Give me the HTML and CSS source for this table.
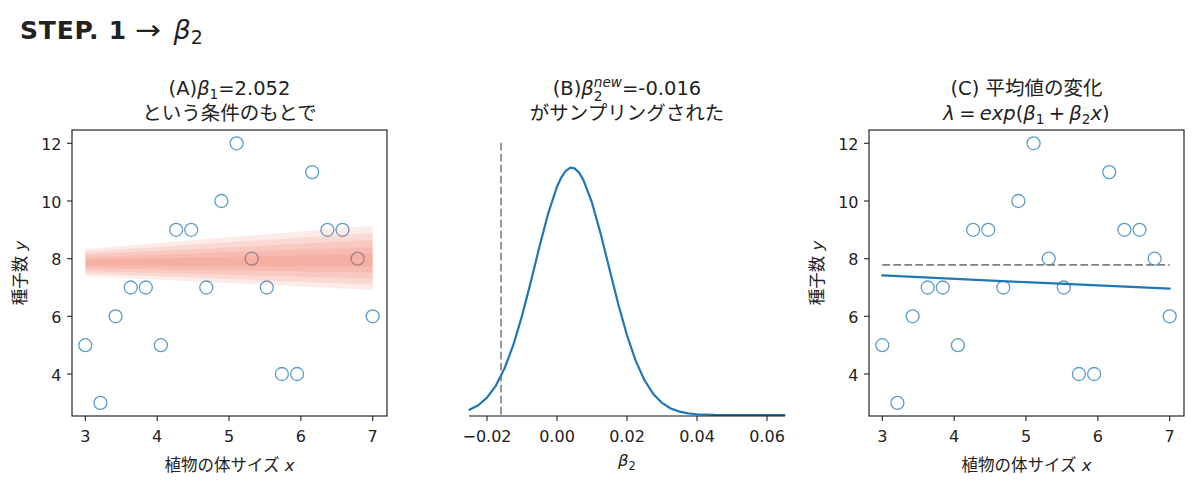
FILE: index.html
```html
<!DOCTYPE html>
<html lang="ja">
<head>
<meta charset="utf-8">
<title>STEP. 1 → β2</title>
<link rel="stylesheet" href="styles.css">
</head>
<body>
<header class="fig-title"><span class="bold">STEP. 1</span> <span class="arrow">→</span> <i class="mi">β</i><sub>2</sub></header>
<main class="panels">
  <section class="panel panel-a">
    <div class="ptitle">
      <div>(A)<i class="mi">β</i><sub>1</sub>=2.052</div>
      <div>という条件のもとで</div>
    </div>
    <svg class="plot" width="400" height="362" viewBox="0 125 400 362">
      <g class="pts">
        <circle cx="85.3" cy="345.2" r="6.5"/><circle cx="100.4" cy="402.9" r="6.5"/><circle cx="115.6" cy="316.3" r="6.5"/><circle cx="130.7" cy="287.5" r="6.5"/><circle cx="145.8" cy="287.5" r="6.5"/>
        <circle cx="160.9" cy="345.2" r="6.5"/><circle cx="176.1" cy="229.8" r="6.5"/><circle cx="191.2" cy="229.8" r="6.5"/><circle cx="206.3" cy="287.5" r="6.5"/><circle cx="221.4" cy="201.0" r="6.5"/>
        <circle cx="236.6" cy="143.3" r="6.5"/><circle cx="251.7" cy="258.7" r="6.5"/><circle cx="266.8" cy="287.5" r="6.5"/><circle cx="281.9" cy="374.0" r="6.5"/><circle cx="297.1" cy="374.0" r="6.5"/>
        <circle cx="312.2" cy="172.1" r="6.5"/><circle cx="327.4" cy="229.8" r="6.5"/><circle cx="342.5" cy="229.8" r="6.5"/><circle cx="357.6" cy="258.7" r="6.5"/><circle cx="372.7" cy="316.3" r="6.5"/>
      </g>
      <g class="band">
        <polygon points="85.3,248.9 372.7,225.7 372.7,290.1 85.3,276.05"/>
        <polygon points="85.3,251.7 372.7,233.0 372.7,284.4 85.3,273.5"/>
        <polygon points="85.3,254.6 372.7,240.1 372.7,278.6 85.3,270.9"/>
        <polygon points="85.3,257.4 372.7,246.9 372.7,272.6 85.3,268.2"/>
        <polygon points="85.3,260.1 372.7,253.6 372.7,266.5 85.3,265.6"/>
      </g>
      <rect class="spine" x="72" y="130" width="315" height="286"/>
      <g class="ticks">
        <line x1="67" x2="72" y1="143.3" y2="143.3"/><line x1="67" x2="72" y1="201.0" y2="201.0"/><line x1="67" x2="72" y1="258.7" y2="258.7"/><line x1="67" x2="72" y1="316.3" y2="316.3"/><line x1="67" x2="72" y1="374.0" y2="374.0"/>
        <line x1="85.3" x2="85.3" y1="416" y2="421"/><line x1="157.2" x2="157.2" y1="416" y2="421"/><line x1="229" x2="229" y1="416" y2="421"/><line x1="300.9" x2="300.9" y1="416" y2="421"/><line x1="372.7" x2="372.7" y1="416" y2="421"/>
      </g>
      <g class="tl tl-y">
        <text x="61.5" y="149.8">12</text><text x="61.5" y="207.5">10</text><text x="61.5" y="265.2">8</text><text x="61.5" y="322.8">6</text><text x="61.5" y="380.5">4</text>
      </g>
      <g class="tl tl-x">
        <text x="85.3" y="441.5">3</text><text x="157.2" y="441.5">4</text><text x="229" y="441.5">5</text><text x="300.9" y="441.5">6</text><text x="372.7" y="441.5">7</text>
      </g>
      <text class="alabel" x="229.5" y="471">植物の体サイズ <tspan class="mi">x</tspan></text>
      <text class="alabel" transform="translate(25.5 273) rotate(-90)">種子数 <tspan class="mi">y</tspan></text>
    </svg>
  </section>

  <section class="panel panel-b">
    <div class="ptitle">
      <div>(B)<i class="mi">β</i><span class="ss"><i class="ss-sup">new</i><span class="ss-sub">2</span></span>=-0.016</div>
      <div>がサンプリングされた</div>
    </div>
    <svg class="plot" width="400" height="362" viewBox="400 125 400 362">
      <line class="dash" x1="501" x2="501" y1="142.7" y2="416"/>
      <polyline class="curve" points="469.5,409.8 478.25,405.25 487,397.6 495.75,385.8 504.5,368.5 513.25,345.2 522,315.9 530.75,282.1 539.5,246.5 548.25,213.25 557,186.7 561.4,177.3 565.75,170.9 570.1,167.9 571.7,167.7 574.5,168.4 578.9,172.4 583.25,179.6 592,202.7 600.75,234.1 609.5,269.3 618.25,304.1 627,335.3 635.75,360.85 644.5,380.24 653.25,393.9 662,402.9 670.75,408.5 679.5,411.65 688.25,413.4 697,414.26 714.5,414.9 740,415 784.5,415"/>
      <line class="spine-line" x1="469" x2="785" y1="416" y2="416"/>
      <g class="ticks">
        <line x1="487" x2="487" y1="416" y2="421"/><line x1="557" x2="557" y1="416" y2="421"/><line x1="627" x2="627" y1="416" y2="421"/><line x1="697" x2="697" y1="416" y2="421"/><line x1="767" x2="767" y1="416" y2="421"/>
      </g>
      <g class="tl tl-x">
        <text x="487" y="441.5">−0.02</text><text x="557" y="441.5">0.00</text><text x="627" y="441.5">0.02</text><text x="697" y="441.5">0.04</text><text x="767" y="441.5">0.06</text>
      </g>
      <text class="alabel" x="627" y="466"><tspan class="mi">β</tspan><tspan class="sub-t" dy="3.5">2</tspan></text>
    </svg>
  </section>

  <section class="panel panel-c">
    <div class="ptitle">
      <div>(C) 平均値の変化</div>
      <div class="mathline"><i class="mi">λ</i><span class="op">=</span><i class="mi">exp</i>(<i class="mi">β</i><sub>1</sub><span class="op">+</span><i class="mi">β</i><sub>2</sub><i class="mi">x</i>)</div>
    </div>
    <svg class="plot" width="400" height="362" viewBox="800 125 400 362">
      <g transform="translate(797 0)">
        <g class="pts">
          <circle cx="85.3" cy="345.2" r="6.5"/><circle cx="100.4" cy="402.9" r="6.5"/><circle cx="115.6" cy="316.3" r="6.5"/><circle cx="130.7" cy="287.5" r="6.5"/><circle cx="145.8" cy="287.5" r="6.5"/>
          <circle cx="160.9" cy="345.2" r="6.5"/><circle cx="176.1" cy="229.8" r="6.5"/><circle cx="191.2" cy="229.8" r="6.5"/><circle cx="206.3" cy="287.5" r="6.5"/><circle cx="221.4" cy="201.0" r="6.5"/>
          <circle cx="236.6" cy="143.3" r="6.5"/><circle cx="251.7" cy="258.7" r="6.5"/><circle cx="266.8" cy="287.5" r="6.5"/><circle cx="281.9" cy="374.0" r="6.5"/><circle cx="297.1" cy="374.0" r="6.5"/>
          <circle cx="312.2" cy="172.1" r="6.5"/><circle cx="327.4" cy="229.8" r="6.5"/><circle cx="342.5" cy="229.8" r="6.5"/><circle cx="357.6" cy="258.7" r="6.5"/><circle cx="372.7" cy="316.3" r="6.5"/>
        </g>
        <line class="dash" x1="85.3" x2="372.7" y1="264.9" y2="264.9"/>
        <polyline class="curve" points="85.3,275.4 229,282.2 372.7,288.7"/>
        <rect class="spine" x="72" y="130" width="315" height="286"/>
        <g class="ticks">
          <line x1="67" x2="72" y1="143.3" y2="143.3"/><line x1="67" x2="72" y1="201.0" y2="201.0"/><line x1="67" x2="72" y1="258.7" y2="258.7"/><line x1="67" x2="72" y1="316.3" y2="316.3"/><line x1="67" x2="72" y1="374.0" y2="374.0"/>
          <line x1="85.3" x2="85.3" y1="416" y2="421"/><line x1="157.2" x2="157.2" y1="416" y2="421"/><line x1="229" x2="229" y1="416" y2="421"/><line x1="300.9" x2="300.9" y1="416" y2="421"/><line x1="372.7" x2="372.7" y1="416" y2="421"/>
        </g>
        <g class="tl tl-y">
          <text x="61.5" y="149.8">12</text><text x="61.5" y="207.5">10</text><text x="61.5" y="265.2">8</text><text x="61.5" y="322.8">6</text><text x="61.5" y="380.5">4</text>
        </g>
        <g class="tl tl-x">
          <text x="85.3" y="441.5">3</text><text x="157.2" y="441.5">4</text><text x="229" y="441.5">5</text><text x="300.9" y="441.5">6</text><text x="372.7" y="441.5">7</text>
        </g>
        <text class="alabel" x="229.5" y="471">植物の体サイズ <tspan class="mi">x</tspan></text>
        <text class="alabel" transform="translate(25.5 273) rotate(-90)">種子数 <tspan class="mi">y</tspan></text>
      </g>
    </svg>
  </section>
</main>
</body>
</html>
```
FILE: styles.css
```css
html, body {
  margin: 0;
  padding: 0;
  background: #ffffff;
}
body {
  width: 1200px;
  height: 487px;
  overflow: hidden;
  font-family: "DejaVu Sans", "Noto Sans CJK JP", sans-serif;
  color: #222222;
}
.mi {
  font-style: italic;
  font-weight: normal;
}
sub {
  font-size: 0.7em;
  vertical-align: -3.5px;
  line-height: 0;
}
.fig-title {
  box-sizing: border-box;
  height: 60px;
  padding: 15px 0 0 20px;
  font-size: 25px;
  line-height: 30px;
  white-space: nowrap;
}
.fig-title .bold {
  font-weight: bold;
  letter-spacing: 0.8px;
}
.fig-title .arrow {
  display: inline-block;
  font-size: 27px;
  transform: scaleX(1.15);
  margin: 0 6px 0 2px;
}
.fig-title .mi {
  font-size: 27px;
}
.fig-title sub {
  font-size: 19px;
  vertical-align: -5px;
}
.panels {
  display: flex;
}
.panel {
  width: 400px;
  display: flex;
  flex-direction: column;
}
.ptitle {
  box-sizing: border-box;
  height: 65px;
  padding-top: 16px;
  font-size: 19.5px;
  line-height: 25px;
  text-align: center;
  white-space: nowrap;
}
.panel-a .ptitle {
  margin-left: 72px;
  width: 315px;
}
.panel-b .ptitle {
  margin-left: 69px;
  width: 316px;
}
.panel-c .ptitle {
  margin-left: 69px;
  width: 315px;
}
.ss {
  display: inline-flex;
  flex-direction: column;
  align-items: flex-start;
  font-size: 0.7em;
  line-height: 1;
  vertical-align: 8px;
  margin-bottom: -3px;
}
.ss-sup {
  font-style: italic;
}
.op {
  margin: 0 0.22em;
}
.plot {
  display: block;
  overflow: visible;
}
.pts circle {
  fill: none;
  stroke: #1f77b4;
  stroke-opacity: 0.72;
  stroke-width: 1.3;
}
.band polygon {
  fill: #f05a44;
  fill-opacity: 0.12;
}
.spine {
  fill: none;
  stroke: #111111;
  stroke-width: 1.1;
}
.spine-line {
  stroke: #111111;
  stroke-width: 1.1;
}
.ticks line {
  stroke: #222222;
  stroke-width: 1.1;
}
.tl text {
  font-family: "DejaVu Sans", sans-serif;
  font-size: 16px;
  fill: #222222;
}
.tl-y text {
  text-anchor: end;
}
.tl-x text {
  text-anchor: middle;
}
.alabel {
  font-family: "DejaVu Sans", "Noto Sans CJK JP", sans-serif;
  font-size: 16.5px;
  fill: #222222;
  text-anchor: middle;
}
.alabel .mi {
  font-style: italic;
}
.sub-t {
  font-size: 11.5px;
}
.dash {
  stroke: #7f7f7f;
  stroke-width: 1.6;
  stroke-dasharray: 7.7 3.3;
}
.curve {
  fill: none;
  stroke: #1f77b4;
  stroke-width: 2.2;
  stroke-linejoin: round;
  stroke-linecap: round;
}
```
